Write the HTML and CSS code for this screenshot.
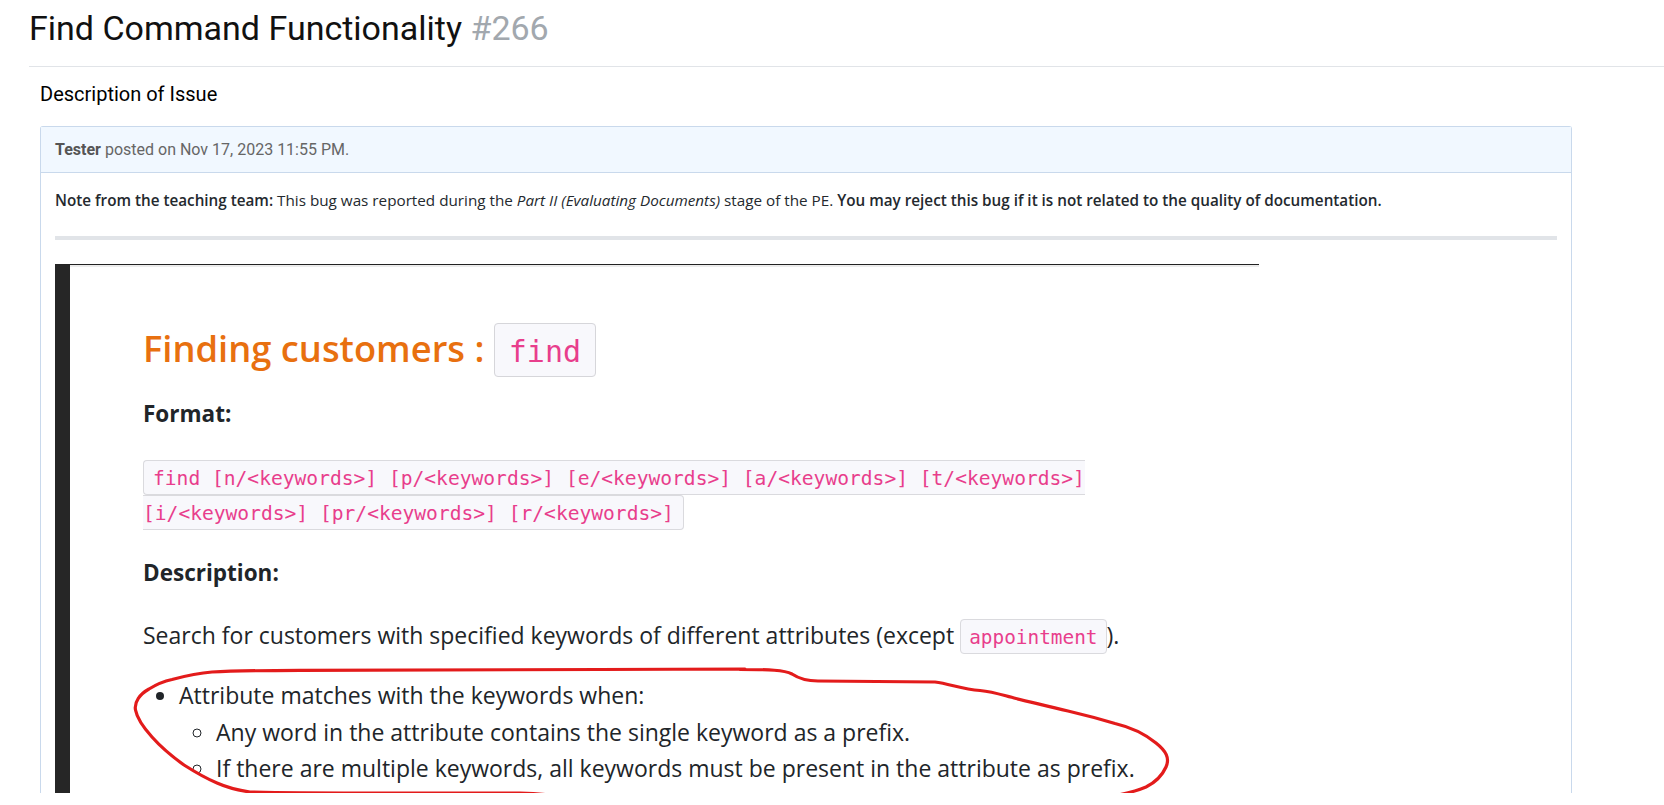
FILE: index.html
```html
<!DOCTYPE html>
<html lang="en">
<head>
<meta charset="utf-8">
<title>Find Command Functionality #266</title>
<link rel="stylesheet" href="styles.css">
</head>
<body>
<div class="page">
  <header class="issue-header">
    <h1 class="issue-title">Find Command Functionality <span class="issue-num">#266</span></h1>
  </header>
  <section class="issue-body">
    <h2 class="section-title">Description of Issue</h2>
    <div class="comment">
      <div class="comment-head"><strong class="author">Tester</strong> posted on Nov 17, 2023 11:55 PM.</div>
      <div class="comment-body">
        <p class="note"><strong>Note from the teaching team:</strong> This bug was reported during the <em>Part II (Evaluating Documents)</em> stage of the PE. <strong>You may reject this bug if it is not related to the quality of documentation.</strong></p>
        <hr class="rule">
        <div class="shot">
          <div class="doc">
            <h2 class="doc-h2">Finding customers : <code class="code code-lg">find</code></h2>
            <h4 class="doc-h4">Format:</h4>
            <p class="doc-code"><code class="code">find [n/&lt;keywords&gt;] [p/&lt;keywords&gt;] [e/&lt;keywords&gt;] [a/&lt;keywords&gt;] [t/&lt;keywords&gt;] [i/&lt;keywords&gt;] [pr/&lt;keywords&gt;] [r/&lt;keywords&gt;]</code></p>
            <h4 class="doc-h4 doc-h4-desc">Description:</h4>
            <p class="doc-p">Search for customers with specified keywords of different attributes (except <code class="code code-sm">appointment</code>).</p>
            <ul class="doc-list">
              <li>Attribute matches with the keywords when:
                <ul class="doc-sublist">
                  <li>Any word in the attribute contains the single keyword as a prefix.</li>
                  <li>If there are multiple keywords, all keywords must be present in the attribute as prefix.</li>
                </ul>
              </li>
            </ul>
          </div>
        </div>
      </div>
    </div>
  </section>
  <svg class="annotation" width="1664" height="805" viewBox="0 0 1664 805" aria-hidden="true">
    <path d="M 740 669.5 C 770 669.5 784 670 792 674 C 798 678 806 681 818 681 L 935 682 C 950 684 962 689 980 690.5 C 995 692 1005 696 1016 698.5 C 1035 703 1050 707 1068 711 C 1085 715 1100 719 1115 723.5 C 1130 727 1145 734 1156 743 C 1166 751 1170 758 1166 767 C 1162 776 1156 782 1146 787 C 1132 793 1115 796 1099 798.5 C 1080 801 1065 801 1053 800.7 C 1030 800 1008 799 988 798.3 C 965 797.5 948 797 920 796 C 880 795 800 798 700 798 C 640 798 570 798 555 796.5 C 545 794 535 793 520 793 L 360 793 C 300 793 270 792.5 250 792 C 236 790 226 787 217 783 C 205 778 195 772 184 765 C 170 755 160 746 152 737 C 143 727 137 718 135.5 710 C 134 702 140 694 149 689 C 157 684 165 681 172 679.5 C 185 676 198 673 212 672 C 230 671 260 670.5 300 670.3 L 600 669.5 L 745 669"/>
  </svg>
</div>
</body>
</html>
```

FILE: styles.css
```css
html, body {
  margin: 0;
  padding: 0;
  background: #ffffff;
}

body {
  font-family: Roboto, "Liberation Sans", Arial, sans-serif;
  color: #000000;
}

.page {
  position: relative;
  width: 1664px;
  height: 793px;
}

.issue-header {
  margin-left: 29px;
  padding: 9px 0 19px 0;
  border-bottom: 1px solid #e1e4e8;
}

.issue-title {
  margin: 0;
  font-size: 34px;
  line-height: 38px;
  font-weight: 400;
  color: #111111;
}

.issue-num {
  color: #a2a8ae;
}

.issue-body {
  margin: 0 92px 0 40px;
  height: 727px;
  overflow: hidden;
}

.section-title {
  margin: 16px 0 0 0;
  font-size: 20px;
  line-height: 23px;
  font-weight: 400;
  color: #000000;
}

.comment {
  margin-top: 20px;
  border: 1px solid #c9d9ec;
  border-bottom: none;
  border-radius: 3px 3px 0 0;
}

.comment-head {
  background: #f1f8ff;
  border-bottom: 1px solid #c9d9ec;
  padding: 13px 14px 13px 14px;
  font-size: 16px;
  line-height: 19px;
  color: #666666;
}

.author {
  color: #555555;
  font-weight: 700;
}

.comment-body {
  padding: 17px 14px 0 14px;
  font-family: "Open Sans", "Noto Sans", sans-serif;
  color: #24292e;
}

.note {
  margin: 0;
  font-size: 15.25px;
  line-height: 20px;
}

.note strong {
  font-weight: 600;
}

.rule {
  margin: 26px 0 0 0;
  height: 4px;
  border: none;
  background: #e1e4e8;
}

.shot {
  margin-top: 24px;
  width: 1204px;
  height: 600px;
  border-left: 15px solid #262626;
  border-top: 1px solid #222222;
  box-sizing: border-box;
  box-shadow: inset 0 2px 0 #ececec;
  background: #ffffff;
}

.doc {
  width: 1056px;
  padding: 56px 0 0 73px;
  color: #212529;
  font-family: "Open Sans", "Noto Sans", sans-serif;
}

.doc-h2 {
  margin: 0;
  font-size: 36.3px;
  line-height: 54px;
  font-weight: 600;
  color: #e8700f;
}

.code {
  font-family: "DejaVu Sans Mono", "Liberation Mono", monospace;
  font-size: 19.6px;
  font-weight: 400;
  line-height: 1;
  color: #e83e8c;
  background: #f8f8fc;
  border: 1px solid #dadade;
  border-radius: 4px;
  padding: 6px 9px 4px 9px;
}

.code-lg {
  font-size: 30px;
  padding: 10px 14px 7px 14px;
  border-width: 1.5px;
  border-color: #d6d6da;
}

.code-sm {
  font-size: 19.4px;
  padding: 6px 8px 4px 8px;
}

.doc-h4 {
  margin: 24px 0 0 0;
  font-size: 22.5px;
  line-height: 30px;
  font-weight: 700;
}

.doc-code {
  margin: 30px 0 0 0;
  font-size: 23px;
  line-height: 35px;
}

.doc-h4-desc {
  margin-top: 29px;
}

.doc-p {
  margin: 29px 0 0 0;
  font-size: 23px;
  line-height: 36px;
}

.doc-list {
  margin: 24px 0 0 0;
  padding-left: 36px;
  font-size: 23px;
  line-height: 36.5px;
}

.doc-sublist {
  margin: 0;
  padding-left: 37px;
  list-style-type: circle;
}

.annotation {
  position: absolute;
  left: 0;
  top: 0;
  pointer-events: none;
}

.annotation path {
  fill: none;
  stroke: #e31b1b;
  stroke-width: 3.2;
  stroke-linejoin: round;
  stroke-linecap: round;
}
```
